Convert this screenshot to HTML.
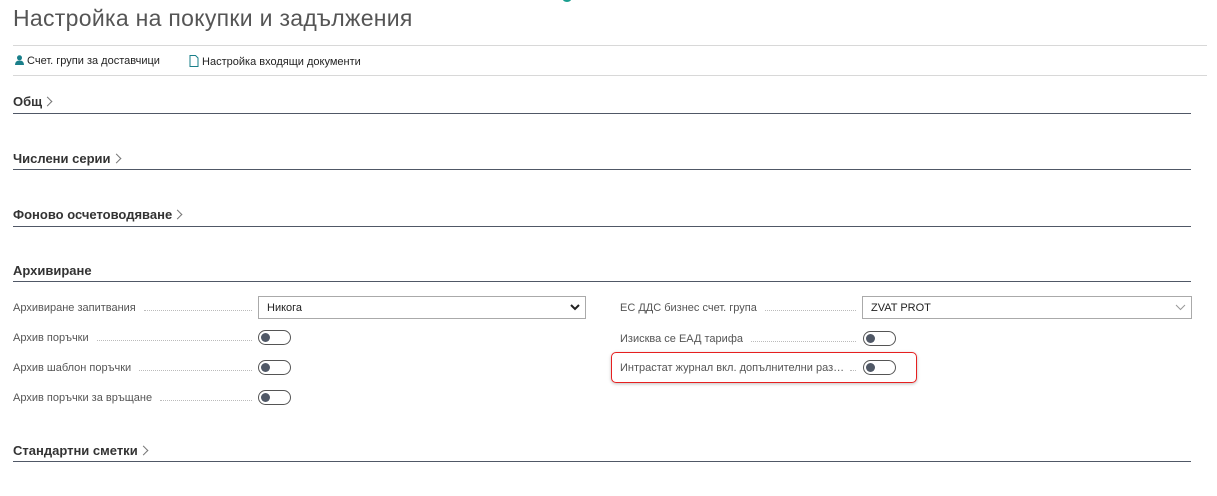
<!DOCTYPE html>
<html><head><meta charset="utf-8"><style>
*{margin:0;padding:0;box-sizing:border-box}
body{width:1217px;height:496px;background:#fff;font-family:"Segoe UI","Liberation Sans","DejaVu Sans",sans-serif;color:#212121;position:relative;overflow:hidden}
.abs{position:absolute}
.title{left:13px;top:5px;font-size:23px;color:#555;font-weight:300;letter-spacing:0.3px}
.hl{height:1px;background:#d8d8d8}
.act{top:54px;font-size:11px;color:#222}
.sec{left:13px;font-size:13px;font-weight:600;color:#333}
.sl{left:13px;width:1178px;height:1px;background:#505866}
.chev{display:inline-block;width:7px;height:7px;border-right:1px solid #777;border-top:1px solid #777;transform:rotate(45deg);margin-left:2px;position:relative;top:-1px}
.row{display:flex;align-items:center;height:16px}
.lbl{font-size:11px;color:#555;white-space:nowrap;overflow:hidden;flex:none}
.dots{flex:1;border-bottom:1px dotted #bbb;height:1px;margin:4px 6px 0 8px}
.tg{width:33px;height:15px;border:1px solid #555;border-radius:8px}
.tg:after{content:"";position:absolute;left:2px;top:2px;width:9px;height:9px;border-radius:50%;background:#505866}
.fld{height:23px;border:1px solid #aaa;font-size:11px;padding:5px 8px;color:#222}
</style></head><body>
<div class="abs" style="left:563px;top:-3px;width:8px;height:5px;background:#1a9e8f;border-radius:50%"></div>
<div class="abs title">Настройка на покупки и задължения</div>
<div class="abs hl" style="left:13px;top:45px;width:1194px"></div>
<div class="abs act" style="left:15px;top:55px"><svg width="9" height="10" style="vertical-align:-1px"><circle cx="4.5" cy="2.8" r="2.5" fill="#1a7f8a"/><path d="M0 10 Q0 5.5 4.5 5.5 Q9 5.5 9 10Z" fill="#1a7f8a"/></svg> Счет. групи за доставчици</div>
<div class="abs act" style="left:189px;top:55px"><svg width="10" height="12" style="vertical-align:-2px"><path d="M1 .5H6.5L9 3V11.5H1Z" fill="none" stroke="#1a7f8a"/></svg> Настройка входящи документи</div>
<div class="abs hl" style="left:13px;top:75px;width:1194px"></div>

<div class="abs sec" style="top:94px">Общ<span class="chev"></span></div>
<div class="abs sl" style="top:113px"></div>
<div class="abs sec" style="top:151px">Числени серии<span class="chev"></span></div>
<div class="abs sl" style="top:169px"></div>
<div class="abs sec" style="top:207px">Фоново осчетоводяване<span class="chev"></span></div>
<div class="abs sl" style="top:226px"></div>
<div class="abs sec" style="top:263px">Архивиране</div>
<div class="abs sl" style="top:281px"></div>

<div class="abs row" style="left:13px;top:300px;width:245px"><span class="lbl">Архивиране запитвания</span><span class="dots"></span></div>
<div class="abs fld" style="left:258px;top:296px;width:328px">Никога<svg class="abs" style="right:5px;top:7px" width="10" height="7"><path d="M1 1L5 5L9 1" fill="none" stroke="#222" stroke-width="2"/></svg></div>

<div class="abs row" style="left:13px;top:330px;width:245px"><span class="lbl">Архив поръчки</span><span class="dots"></span></div>
<div class="abs tg" style="left:258px;top:330px"></div>
<div class="abs row" style="left:13px;top:360px;width:245px"><span class="lbl">Архив шаблон поръчки</span><span class="dots"></span></div>
<div class="abs tg" style="left:258px;top:360px"></div>
<div class="abs row" style="left:13px;top:390px;width:245px"><span class="lbl">Архив поръчки за връщане</span><span class="dots"></span></div>
<div class="abs tg" style="left:258px;top:390px"></div>

<div class="abs row" style="left:620px;top:300px;width:242px"><span class="lbl">ЕС ДДС бизнес счет. група</span><span class="dots"></span></div>
<div class="abs fld" style="left:862px;top:296px;width:330px">ZVAT PROT<svg class="abs" style="right:5px;top:7px" width="11" height="7"><path d="M1 1L5.5 5.5L10 1" fill="none" stroke="#999"/></svg></div>
<div class="abs row" style="left:620px;top:331px;width:242px"><span class="lbl">Изисква се ЕАД тарифа</span><span class="dots"></span></div>
<div class="abs tg" style="left:863px;top:331px"></div>
<div class="abs" style="left:611px;top:352px;width:306px;height:31px;border:1.5px solid #e62020;border-radius:5px;box-shadow:0 1px 3px rgba(0,0,0,.25)"></div>
<div class="abs row" style="left:620px;top:360px;width:242px"><span class="lbl" style="width:228px;text-overflow:ellipsis">Интрастат журнал вкл. допълнителни разходи</span><span class="dots" style="margin-left:2px"></span></div>
<div class="abs tg" style="left:863px;top:360px"></div>

<div class="abs sec" style="top:443px">Стандартни сметки<span class="chev"></span></div>
<div class="abs sl" style="top:461px"></div>
</body></html>
